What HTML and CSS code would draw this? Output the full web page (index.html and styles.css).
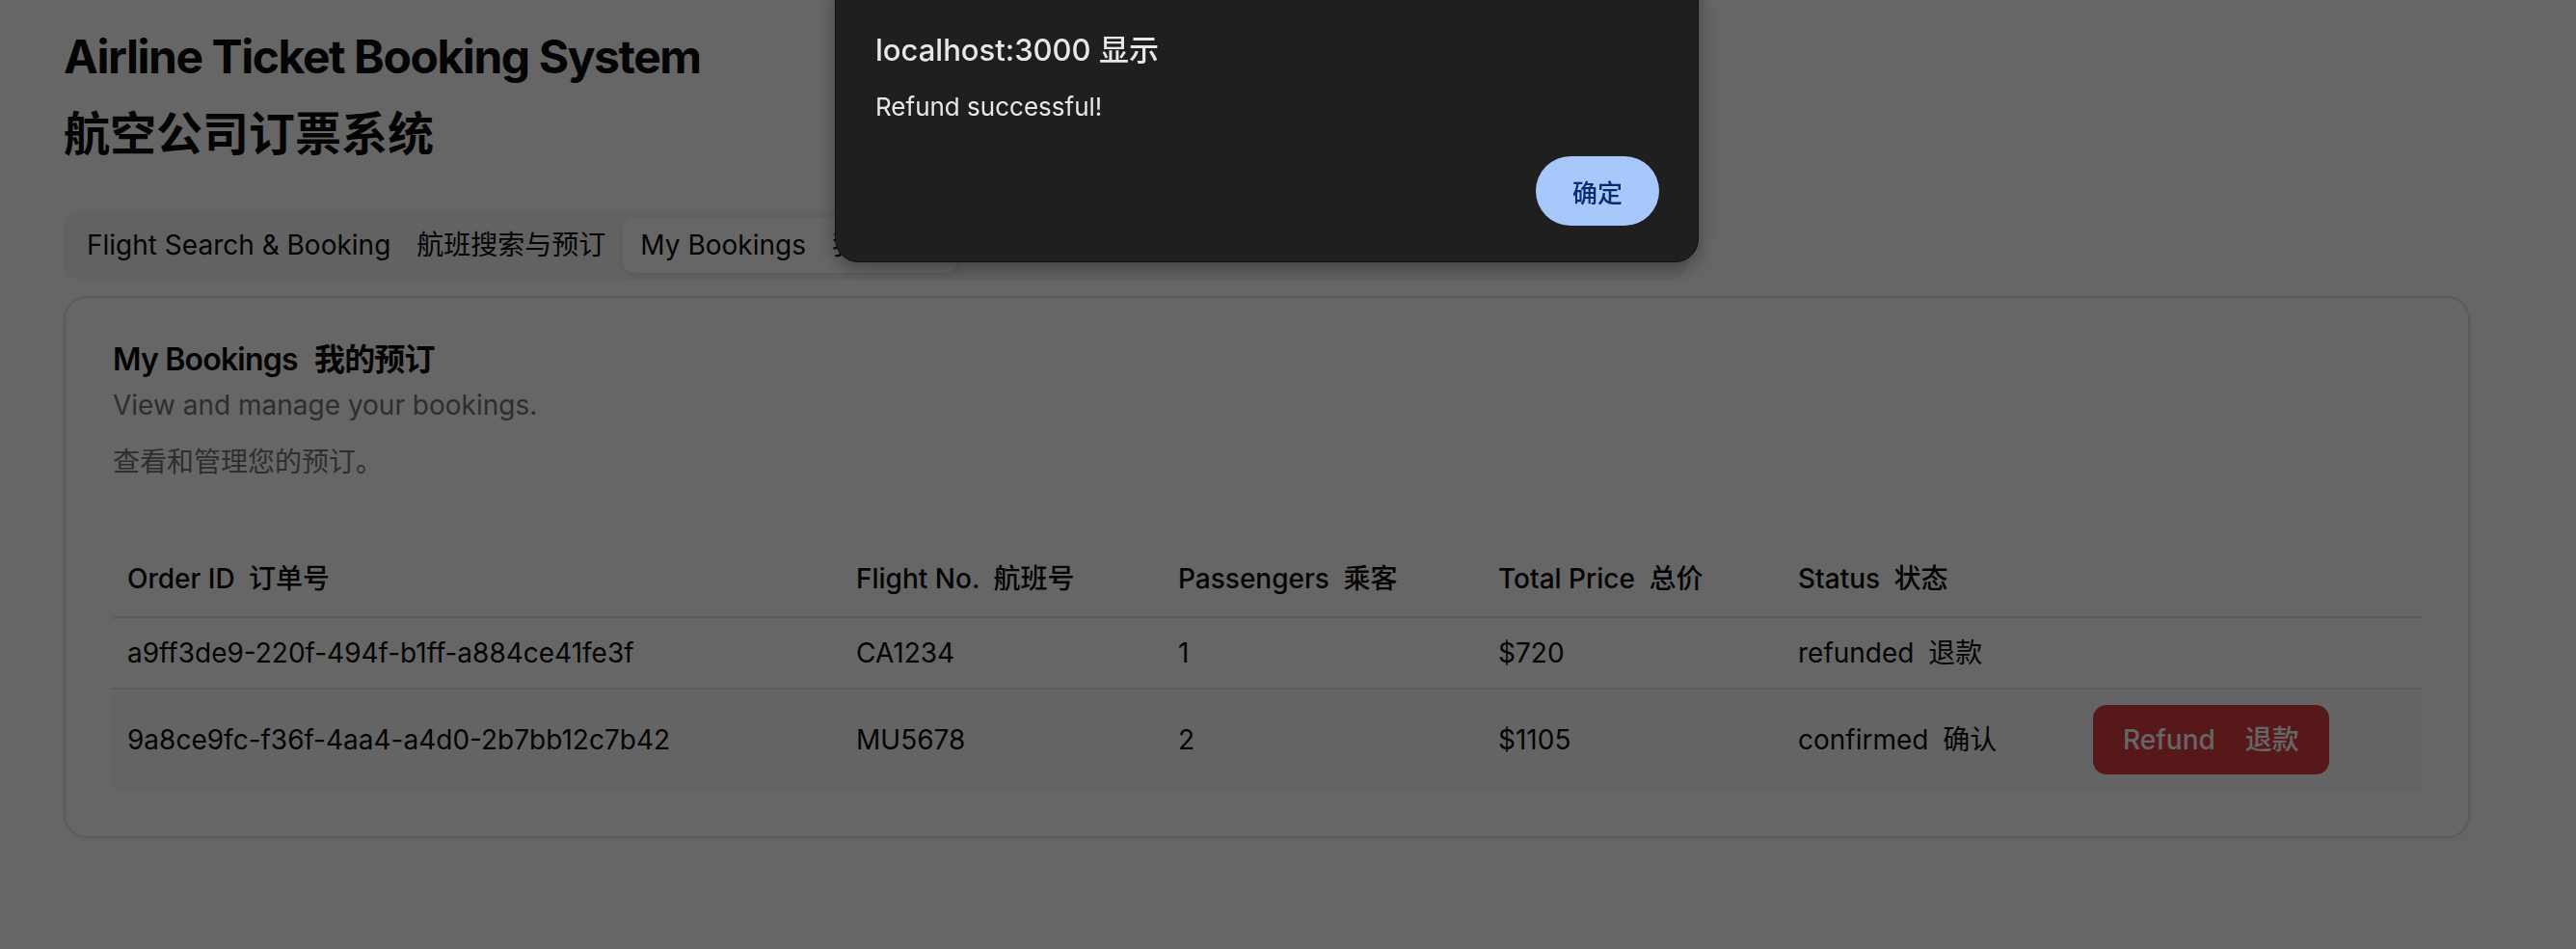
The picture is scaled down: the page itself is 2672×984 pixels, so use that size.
FILE: index.html
```html
<!DOCTYPE html>
<html lang="en">
<head>
<meta charset="utf-8">
<title>Airline Ticket Booking System</title>
<link rel="stylesheet" href="styles.css">
</head>
<body>
<div class="page">
  <h1 class="app-title">
    <span class="title-en">Airline Ticket Booking System</span>
    <span class="title-zh">航空公司订票系统</span>
  </h1>

  <div class="tabs">
    <div class="tab-list">
      <button class="tab">Flight Search &amp; Booking <span class="zh">航班搜索与预订</span></button>
      <button class="tab active">My Bookings <span class="zh">我的预订</span></button>
      <button class="tab">Admin Panel: Flight &amp; Booking Management <span class="zh">管理后台</span></button>
    </div>

    <div class="card">
      <div class="card-header">
        <h2 class="card-title">My Bookings <span class="zh-title">我的预订</span></h2>
        <p class="card-desc">View and manage your bookings.</p>
        <p class="card-desc card-desc-zh">查看和管理您的预订。</p>
      </div>
      <div class="card-content">
        <table class="bookings">
          <colgroup>
            <col class="c-order">
            <col class="c-flight">
            <col class="c-pass">
            <col class="c-price">
            <col class="c-status">
            <col class="c-action">
          </colgroup>
          <thead>
            <tr>
              <th>Order ID <span class="zh-sm">订单号</span></th>
              <th>Flight No. <span class="zh-sm">航班号</span></th>
              <th>Passengers <span class="zh-sm">乘客</span></th>
              <th>Total Price <span class="zh-sm">总价</span></th>
              <th>Status <span class="zh-sm">状态</span></th>
              <th></th>
            </tr>
          </thead>
          <tbody>
            <tr>
              <td>a9ff3de9-220f-494f-b1ff-a884ce41fe3f</td>
              <td>CA1234</td>
              <td>1</td>
              <td>$720</td>
              <td>refunded <span class="zh-sm">退款</span></td>
              <td></td>
            </tr>
            <tr class="row-hover">
              <td>9a8ce9fc-f36f-4aa4-a4d0-2b7bb12c7b42</td>
              <td>MU5678</td>
              <td>2</td>
              <td>$1105</td>
              <td>confirmed <span class="zh-sm">确认</span></td>
              <td><button class="btn-refund">Refund<span class="btn-zh">退款</span></button></td>
            </tr>
          </tbody>
        </table>
      </div>
    </div>
  </div>
</div>

<div class="overlay"></div>

<div class="dialog" role="alertdialog">
  <div class="dialog-title">localhost:3000 显示</div>
  <div class="dialog-msg">Refund successful!</div>
  <div class="dialog-actions">
    <button class="dialog-ok">确定</button>
  </div>
</div>
</body>
</html>
```

FILE: styles.css
```css
* { box-sizing: border-box; }

html, body {
  margin: 0;
  padding: 0;
  background: #ffffff;
}

body {
  font-family: Inter, "Noto Sans CJK SC", sans-serif;
  color: #0a0a0a;
  width: 2672px;
  height: 984px;
  overflow: hidden;
}

.page {
  padding: 19px 110px 40px 66px;
}

.app-title {
  margin: 0 0 39px;
  font-family: Inter, "Noto Sans CJK SC", sans-serif;
  font-weight: 700;
  font-size: 48px;
  line-height: 80px;
}

.title-en {
  display: block;
  letter-spacing: -0.03em;
}

.title-zh {
  display: block;
}

.tab-list {
  display: inline-flex;
  align-items: center;
  height: 72px;
  padding: 6px;
  background: #f4f4f5;
  border-radius: 18px;
}

.tab {
  height: 58px;
  padding: 0 16px;
  border: 2px solid transparent;
  border-radius: 12px;
  background: transparent;
  color: #0a0a0a;
  font-family: Inter, "Noto Sans CJK SC", sans-serif;
  font-weight: 400;
  font-size: 28px;
  line-height: 40px;
  white-space: nowrap;
  display: inline-flex;
  align-items: center;
}

.tab.active {
  background: #ffffff;
  box-shadow: 0 2px 6px rgba(0, 0, 0, 0.08);
}

.zh {
  margin-left: 27px;
}

.zh-title {
  margin-left: 10px;
}

.zh-sm {
  margin-left: 7px;
}

.card {
  margin-top: 17px;
  background: #ffffff;
  border: 2px solid #e4e4e7;
  border-radius: 24px;
  box-shadow: 0 2px 6px rgba(0, 0, 0, 0.06);
}

.card-header {
  padding: 48px 48px 48px 49px;
}

.card-title {
  margin: 0;
  font-weight: 600;
  font-size: 32px;
  line-height: 32px;
  letter-spacing: -0.025em;
}

.card-desc {
  margin: 11px 0 0;
  font-size: 28px;
  line-height: 40px;
  color: #737373;
}

.card-desc-zh {
  margin-top: 19px;
}

.card-content {
  padding: 13px 48px 48px;
}

.bookings {
  width: 100%;
  border-collapse: collapse;
  table-layout: fixed;
  font-size: 28px;
  line-height: 40px;
}

.c-order { width: 756px; }
.c-flight { width: 334px; }
.c-pass { width: 332px; }
.c-price { width: 311px; }
.c-status { width: 306px; }
.c-action { width: 357px; }

.bookings th {
  height: 80px;
  padding: 0 16px;
  text-align: left;
  vertical-align: middle;
  font-weight: 500;
  color: #0a0a0a;
  white-space: nowrap;
  border-bottom: 2px solid #e4e4e7;
}

.bookings td {
  padding: 16px;
  vertical-align: middle;
  white-space: nowrap;
  color: #0a0a0a;
}

.bookings tbody tr {
  border-bottom: 2px solid #e4e4e7;
}

.bookings tbody tr:last-child {
  border-bottom: 0;
}

.row-hover {
  background: #fafafa;
}

.btn-refund {
  display: inline-flex;
  align-items: center;
  height: 72px;
  padding: 0 31px;
  border: 0;
  border-radius: 14px;
  background: rgb(216, 60, 60);
  color: #ffffff;
  font-family: Inter, "Noto Sans CJK SC", sans-serif;
  font-weight: 500;
  font-size: 28px;
  line-height: 40px;
}

.btn-zh {
  margin-left: 31px;
}

.overlay {
  position: fixed;
  inset: 0;
  background: rgba(0, 0, 0, 0.6);
}

.dialog {
  position: fixed;
  left: 866px;
  top: -30px;
  width: 896px;
  padding: 61px 40px 37px 41px;
  background: #1f1f1f;
  border: 1px solid #111111;
  border-radius: 24px;
  box-shadow: 0 6px 20px rgba(0, 0, 0, 0.35);
  color: #e8e8e8;
  font-family: Inter, "Noto Sans CJK SC", sans-serif;
}

.dialog-title {
  font-weight: 500;
  font-size: 31px;
  line-height: 40px;
}

.dialog-msg {
  margin-top: 21px;
  font-size: 26px;
  line-height: 36px;
}

.dialog-actions {
  display: flex;
  justify-content: flex-end;
  margin-top: 33px;
}

.dialog-ok {
  width: 128px;
  height: 72px;
  border: 0;
  border-radius: 36px;
  background: #a8c7fa;
  color: #062e6f;
  font-family: Inter, "Noto Sans CJK SC", sans-serif;
  font-weight: 500;
  font-size: 26px;
}
```
